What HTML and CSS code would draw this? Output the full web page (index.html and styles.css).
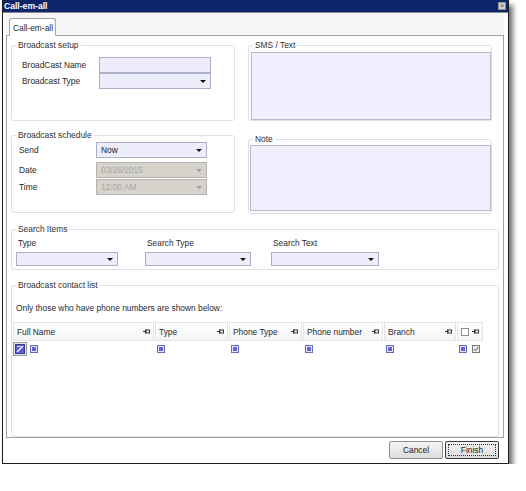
FILE: index.html
```html
<!DOCTYPE html>
<html>
<head>
<meta charset="utf-8">
<link rel="stylesheet" href="styles.css">
</head>
<body>
<div class="window">
  <div class="titlebar">
    <span class="title">Call-em-all</span>
    <span class="close">×</span>
  </div>
  <div class="client">
    <div class="tabstrip">
      <div class="tab">Call-em-all</div>
    </div>
    <div class="panel">
      <div class="topgrid">
        <div class="col">
          <fieldset class="group setup">
            <legend>Broadcast setup</legend>
            <div class="form setup-body">
              <span class="lbl">BroadCast Name</span>
              <div class="input"></div>
              <span class="lbl">Broadcast Type</span>
              <div class="combo"><span class="val"></span><span class="arrow"></span></div>
            </div>
          </fieldset>
          <fieldset class="group schedule">
            <legend>Broadcast schedule</legend>
            <div class="form sched">
              <span class="lbl">Send</span>
              <div class="combo"><span class="val">Now</span><span class="arrow"></span></div>
              <span class="lbl">Date</span>
              <div class="combo disabled"><span class="val">03/26/2015</span><span class="arrow"></span></div>
              <span class="lbl">Time</span>
              <div class="combo disabled"><span class="val">12:00 AM</span><span class="arrow"></span></div>
            </div>
          </fieldset>
        </div>
        <div class="col right">
          <fieldset class="group sms">
            <legend>SMS / Text</legend>
            <div class="memo sms-memo"></div>
          </fieldset>
          <fieldset class="group note">
            <legend>Note</legend>
            <div class="memo note-memo"></div>
          </fieldset>
        </div>
      </div>
      <fieldset class="group search">
        <legend>Search Items</legend>
        <div class="searchgrid">
          <span class="slbl">Type</span>
          <span class="slbl">Search Type</span>
          <span class="slbl">Search Text</span>
          <div class="combo w1"><span class="val"></span><span class="arrow"></span></div>
          <div class="combo w2"><span class="val"></span><span class="arrow"></span></div>
          <div class="combo w3"><span class="val"></span><span class="arrow"></span></div>
        </div>
      </fieldset>
      <fieldset class="group contacts">
        <legend>Broadcast contact list</legend>
        <div class="hint">Only those who have phone numbers are shown below:</div>
        <div class="table">
          <div class="hcell"><span>Full Name</span><svg class="pin" width="7" height="5" viewBox="0 0 7 5"><path d="M0 2.5H2.5M2.5 0.5V4.5" stroke="#333" stroke-width="1" fill="none"/><rect x="3" y="1" width="3.5" height="3" fill="#fff" stroke="#333" stroke-width="1"/></svg></div>
          <div class="hcell"><span>Type</span><svg class="pin" width="7" height="5" viewBox="0 0 7 5"><path d="M0 2.5H2.5M2.5 0.5V4.5" stroke="#333" stroke-width="1" fill="none"/><rect x="3" y="1" width="3.5" height="3" fill="#fff" stroke="#333" stroke-width="1"/></svg></div>
          <div class="hcell"><span>Phone Type</span><svg class="pin" width="7" height="5" viewBox="0 0 7 5"><path d="M0 2.5H2.5M2.5 0.5V4.5" stroke="#333" stroke-width="1" fill="none"/><rect x="3" y="1" width="3.5" height="3" fill="#fff" stroke="#333" stroke-width="1"/></svg></div>
          <div class="hcell"><span>Phone number</span><svg class="pin" width="7" height="5" viewBox="0 0 7 5"><path d="M0 2.5H2.5M2.5 0.5V4.5" stroke="#333" stroke-width="1" fill="none"/><rect x="3" y="1" width="3.5" height="3" fill="#fff" stroke="#333" stroke-width="1"/></svg></div>
          <div class="hcell"><span>Branch</span><svg class="pin" width="7" height="5" viewBox="0 0 7 5"><path d="M0 2.5H2.5M2.5 0.5V4.5" stroke="#333" stroke-width="1" fill="none"/><rect x="3" y="1" width="3.5" height="3" fill="#fff" stroke="#333" stroke-width="1"/></svg></div>
          <div class="hcell chk"><span class="hbox"></span><svg class="pin" width="7" height="5" viewBox="0 0 7 5"><path d="M0 2.5H2.5M2.5 0.5V4.5" stroke="#333" stroke-width="1" fill="none"/><rect x="3" y="1" width="3.5" height="3" fill="#fff" stroke="#333" stroke-width="1"/></svg></div>

          <div class="rcell first">
            <span class="rowind"><svg width="10" height="10" viewBox="0 0 10 10"><rect x="0.5" y="0.5" width="9" height="9" fill="#5b5bd6" stroke="#3a3a8a"/><path d="M2 8L8 2" stroke="#fff" stroke-width="1.2"/><path d="M2 2.5H6" stroke="#fff" stroke-width="0.8"/></svg></span>
            <span class="cb"></span>
          </div>
          <div class="rcell"><span class="cb"></span></div>
          <div class="rcell"><span class="cb"></span></div>
          <div class="rcell"><span class="cb"></span></div>
          <div class="rcell"><span class="cb"></span></div>
          <div class="rcell last"><span class="cb"></span><span class="gcheck"><svg width="8" height="8" viewBox="0 0 8 8"><rect x="0.5" y="0.5" width="7" height="7" fill="#ececec" stroke="#7a7a7a"/><path d="M1.8 4.2L3.3 5.7L6.3 2" stroke="#555" stroke-width="1" fill="none"/></svg></span></div>
        </div>
      </fieldset>
    </div>
    <div class="buttons">
      <div class="btn">Cancel</div>
      <div class="btn default"><span class="focus">Finish</span></div>
    </div>
  </div>
</div>
</body>
</html>
```
FILE: styles.css
```css
html, body {
  margin: 0;
  padding: 0;
  background: #ffffff;
}
body {
  font-family: "Liberation Sans", Arial, sans-serif;
  font-size: 8.4px;
  color: #2a2a2a;
}
.window {
  margin-left: 2px;
  width: 507px;
  height: 464px;
  box-sizing: border-box;
  border: 1px solid #1e1e1e;
  border-top: none;
  background: #ffffff;
  display: flex;
  flex-direction: column;
  box-shadow: 4px 5px 5px rgba(0, 0, 0, 0.55);
}
.titlebar {
  height: 13px;
  box-sizing: border-box;
  background: #0b266b;
  border-bottom: 1px solid #8a8a8a;
  display: flex;
  align-items: center;
  justify-content: space-between;
  padding: 0 2px 0 1px;
}
.title {
  color: #ffffff;
  font-weight: bold;
  font-size: 8.6px;
  line-height: 12px;
}
.close {
  width: 8px;
  height: 8px;
  box-sizing: border-box;
  background: #d4d4d4;
  border: 1px solid #8c8c8c;
  color: #555;
  font-size: 8px;
  line-height: 5px;
  text-align: center;
  overflow: hidden;
}
.client {
  flex: 1;
  display: flex;
  flex-direction: column;
  padding: 0 4px 0 3px;
  background: #ffffff;
}
.tabstrip {
  height: 23px;
  box-sizing: border-box;
  background: #f7f4f7;
  border-bottom: 1px solid #a3a3a3;
  display: flex;
  align-items: flex-end;
  padding-left: 3px;
}
.tab {
  width: 47px;
  height: 18px;
  box-sizing: border-box;
  background: #ffffff;
  border: 1px solid #a3a3a3;
  border-bottom: 1px solid #ffffff;
  border-radius: 3px 3px 0 0;
  margin-bottom: -1px;
  padding: 4px 0 0 3px;
  line-height: 10px;
}
.panel {
  height: 402px;
  box-sizing: border-box;
  border: 1px solid #a3a3a3;
  border-top: none;
  padding: 4px 4px 0 4px;
  display: flex;
  flex-direction: column;
}
.topgrid {
  display: grid;
  grid-template-columns: 224px 244px;
  column-gap: 13px;
}
.col {
  display: flex;
  flex-direction: column;
}
.group {
  margin: 0;
  padding: 0;
  border: 1px solid #d9e0e6;
  border-radius: 3px;
  min-width: 0;
  box-sizing: border-box;
}
.group legend {
  padding: 0 2px;
  margin-left: 4px;
  line-height: 11px;
  color: #303030;
}
.setup {
  height: 81px;
}
.setup-body {
  padding: 6px 0 0 10px;
}
.schedule {
  height: 83px;
  margin-top: 9px;
}
.form {
  display: grid;
  grid-template-columns: 77px 112px;
  align-items: center;
}
.form.sched {
  grid-template-columns: 77px 111px;
  padding: 1px 0 0 7px;
}
.form.sched .lbl:nth-child(1),
.form.sched .combo:nth-child(2) {
  margin-bottom: 4px;
}
.form.sched .lbl:nth-child(5),
.form.sched .combo:nth-child(6) {
  margin-top: 1px;
}
.lbl {
  line-height: 16px;
  color: #2a2a2a;
}
.input, .combo {
  height: 16px;
  box-sizing: border-box;
  border: 1px solid #aeb0c8;
  background: #ededfc;
}
.combo {
  display: flex;
  align-items: center;
  justify-content: space-between;
  padding: 0 4px 0 4px;
}
.combo .val {
  line-height: 12px;
  color: #1a1a1a;
}
.arrow {
  width: 0;
  height: 0;
  border-left: 3px solid transparent;
  border-right: 3px solid transparent;
  border-top: 3px solid #111;
}
.combo.disabled {
  background: #d6d3cd;
  border-color: #b6b4b0;
}
.combo.disabled .val {
  color: #a7a5a1;
}
.combo.disabled .arrow {
  border-top-color: #a0a0a0;
}
.sms {
  height: 81px;
}
.note {
  height: 80px;
  margin-top: 13px;
}
.memo {
  box-sizing: border-box;
  border: 1px solid #b9b9cc;
  background: #efeffd;
}
.sms-memo {
  height: 68px;
  margin: 1px 0 0 2px;
}
.note-memo {
  height: 66px;
  margin: 0 0 0 1px;
}
.search {
  margin-top: 10px;
  height: 46px;
}
.searchgrid {
  display: grid;
  grid-template-columns: 129px 126px 108px;
  grid-template-rows: 12px 14px;
  row-gap: 3px;
  padding: 2px 0 0 4px;
}
.slbl {
  line-height: 12px;
  padding-left: 2px;
}
.searchgrid .combo {
  height: 14px;
}
.w1 { width: 102px; }
.w2 { width: 106px; }
.w3 { width: 108px; }
.contacts {
  margin-top: 10px;
  flex: 1;
}
.hint {
  margin-top: 12px;
  padding-left: 4px;
  line-height: 11px;
}
.table {
  margin-top: 8px;
  margin-left: 1px;
  display: grid;
  grid-template-columns: 141px 73px 73px 80px 72px 26px;
  grid-template-rows: 19px 15px;
  column-gap: 1px;
}
.hcell {
  box-sizing: border-box;
  border: 1px solid #e2e5e9;
  background: linear-gradient(#ffffff, #f3f4f6);
  display: flex;
  align-items: center;
  justify-content: space-between;
  padding: 0 3px 0 3px;
  color: #2a2a2a;
}
.hcell.chk {
  justify-content: flex-start;
  gap: 3px;
  padding-left: 3px;
}
.hbox {
  width: 8px;
  height: 8px;
  box-sizing: border-box;
  border: 1px solid #8e8e8e;
  background: #fff;
}
.rcell {
  display: flex;
  align-items: center;
  padding-left: 2px;
  gap: 4px;
}
.rcell.first {
  padding-left: 0;
  gap: 3px;
}
.rcell.last {
  gap: 5px;
}
.rowind {
  width: 14px;
  height: 14px;
  box-sizing: border-box;
  border: 1px solid #9a9a9a;
  background: #e6e6e6;
  display: flex;
  align-items: center;
  justify-content: center;
}
.rowind svg, .gcheck svg {
  display: block;
}
.cb {
  width: 8px;
  height: 8px;
  box-sizing: border-box;
  border: 1px solid #6a6ab4;
  background: #6464dc;
  box-shadow: inset 0 0 0 1px #e4e4ff;
}
.gcheck {
  width: 8px;
  height: 8px;
}
.buttons {
  display: flex;
  justify-content: flex-end;
  gap: 2px;
  padding: 3px 5px 0 0;
}
.btn {
  width: 54px;
  height: 18px;
  box-sizing: border-box;
  border: 1px solid #8f9090;
  border-radius: 2px;
  background: linear-gradient(#f4f4f4, #dcdcdc);
  display: flex;
  align-items: center;
  justify-content: center;
  color: #1a1a1a;
}
.btn.default {
  border-color: #3a3a3a;
  padding: 2px;
}
.focus {
  flex: 1;
  align-self: stretch;
  border: 1px dotted #333;
  display: flex;
  align-items: center;
  justify-content: center;
}
```
